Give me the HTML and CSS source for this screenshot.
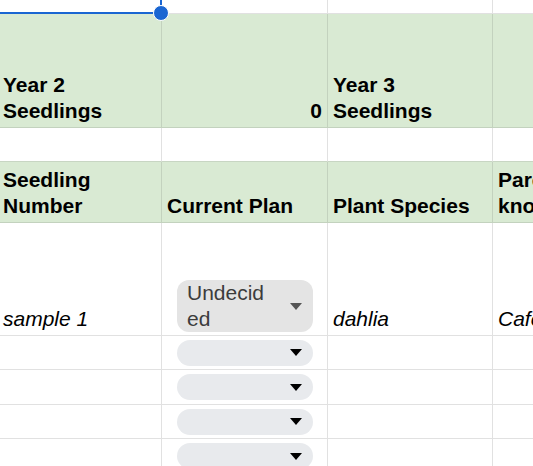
FILE: index.html
```html
<!DOCTYPE html>
<html>
<head>
<meta charset="utf-8">
<link rel="stylesheet" href="styles.css">
</head>
<body>
<div class="sheet">
  <div class="grid">
    <!-- row 0 -->
    <div class="cell r0"></div>
    <div class="cell r0"></div>
    <div class="cell r0"></div>
    <div class="cell r0"></div>
    <!-- row 1 -->
    <div class="cell green bold first">Year 2<br>Seedlings</div>
    <div class="cell green bold right">0</div>
    <div class="cell green bold">Year 3<br>Seedlings</div>
    <div class="cell green bold"></div>
    <!-- row 2 -->
    <div class="cell gap"></div>
    <div class="cell gap"></div>
    <div class="cell gap"></div>
    <div class="cell gap"></div>
    <!-- row 3 -->
    <div class="cell green bold first">Seedling<br>Number</div>
    <div class="cell green bold">Current Plan</div>
    <div class="cell green bold">Plant Species</div>
    <div class="cell green bold clip">Parent, if<br>known</div>
    <!-- row 4 -->
    <div class="cell italic first">sample 1</div>
    <div class="cell chipcell">
      <div class="chip chip-set"><span class="chip-text">Undecided</span><span class="arrow arrow-grey"></span></div>
    </div>
    <div class="cell italic">dahlia</div>
    <div class="cell italic clip nowrap">Cafe au Lait</div>
    <!-- rows 5-8 -->
    <div class="cell"></div>
    <div class="cell chipcell center"><div class="chip"><span class="chip-text"></span><span class="arrow"></span></div></div>
    <div class="cell"></div>
    <div class="cell"></div>

    <div class="cell"></div>
    <div class="cell chipcell center"><div class="chip"><span class="chip-text"></span><span class="arrow"></span></div></div>
    <div class="cell"></div>
    <div class="cell"></div>

    <div class="cell"></div>
    <div class="cell chipcell center"><div class="chip"><span class="chip-text"></span><span class="arrow"></span></div></div>
    <div class="cell"></div>
    <div class="cell"></div>

    <div class="cell"></div>
    <div class="cell chipcell center"><div class="chip"><span class="chip-text"></span><span class="arrow"></span></div></div>
    <div class="cell"></div>
    <div class="cell"></div>
  </div>
  <div class="sel-h"></div>
  <div class="sel-v"></div>
  <div class="sel-dot"></div>
</div>
</body>
</html>
```

FILE: styles.css
```css
html, body {
  margin: 0;
  padding: 0;
  background: #ffffff;
}
body {
  width: 533px;
  height: 466px;
  overflow: hidden;
  font-family: "Liberation Sans", Arial, sans-serif;
  font-size: 21px;
  line-height: 26px;
  color: #000000;
}
.sheet {
  position: relative;
  width: 533px;
  height: 466px;
  overflow: hidden;
}
.grid {
  display: grid;
  grid-template-columns: 162px 166px 165px 165px;
  grid-template-rows: 14px 114px 34px 61px 113px 34px 35px 34px 35px;
}
.cell {
  box-sizing: border-box;
  border-right: 1px solid #e1e1e1;
  border-bottom: 1px solid #e1e1e1;
  display: flex;
  align-items: flex-end;
  padding: 0 5px 3px 5px;
  min-width: 0;
}
.first {
  padding-left: 3px;
}
.green {
  background: #d9ead3;
  border-right-color: #c3d2be;
  border-bottom-color: #c3d2be;
}
.gap {
  border-bottom-color: #c8d6c3;
}
.bold {
  font-weight: bold;
}
.italic {
  font-style: italic;
}
.right {
  justify-content: flex-end;
}
.clip {
  overflow: hidden;
}
.nowrap {
  white-space: nowrap;
}
.chipcell {
  padding: 0 14px 3px 15px;
}
.chipcell.center {
  align-items: center;
  padding-bottom: 0;
}
.chip {
  flex: 1;
  display: flex;
  align-items: center;
  justify-content: space-between;
  height: 26px;
  border-radius: 13px;
  background: #e8eaed;
  padding: 0 11px 0 10px;
  box-sizing: border-box;
}
.chip-set {
  height: auto;
  border-radius: 12px;
  background: #e4e4e4;
}
.chip-text {
  width: 82px;
  word-break: break-all;
  color: #3c3c3c;
}
.arrow {
  width: 0;
  height: 0;
  border-left: 6.5px solid transparent;
  border-right: 6.5px solid transparent;
  border-top: 7px solid #000000;
}
.arrow-grey {
  border-top-color: #555555;
}
.sel-h {
  position: absolute;
  left: 0;
  top: 12px;
  width: 162px;
  height: 2px;
  background: #1a66d2;
}
.sel-v {
  position: absolute;
  left: 160px;
  top: 0;
  width: 2px;
  height: 14px;
  background: #1a66d2;
}
.sel-dot {
  position: absolute;
  left: 153px;
  top: 5px;
  width: 14px;
  height: 14px;
  border-radius: 50%;
  background: #1a66d2;
  border: 1px solid #ffffff;
}
```
